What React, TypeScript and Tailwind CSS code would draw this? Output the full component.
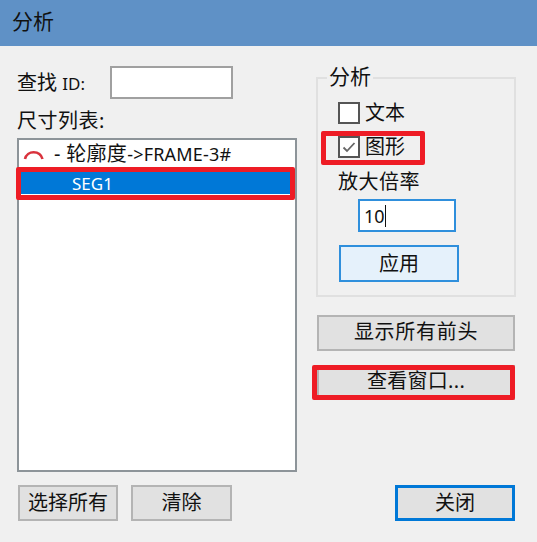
const font = { fontFamily: '"Noto Sans", "Noto Sans CJK SC", sans-serif' }

function GrayButton({ label, className }: { label: string; className: string }) {
  return (
    <button
      type="button"
      className={`flex items-center justify-center border-2 bg-[#e1e1e1] text-[20px] leading-none text-[#111] ${className}`}
    >
      {label}
    </button>
  )
}

function Checkbox({ checked, label }: { checked?: boolean; label: string }) {
  return (
    <div className="flex h-[22px] items-center">
      <span className="flex h-[22px] w-[22px] items-center justify-center border-2 border-[#555] bg-white">
        {checked && (
          <svg width="14" height="12" viewBox="0 0 14 12" fill="none">
            <path d="M1.5 6.5 L5 10 L12.5 2" stroke="#666" strokeWidth="1.8" />
          </svg>
        )}
      </span>
      <span className="ml-[5px] text-[20px] leading-none text-[#111]">{label}</span>
    </div>
  )
}

export default function App() {
  return (
    <div className="flex h-[542px] w-[537px] flex-col overflow-hidden bg-[#f0f0f0]" style={font}>
      <div className="flex h-[46px] shrink-0 items-center bg-[#5f91c6] pb-[2px] pl-[12px] text-[21px] text-[#111]">
        分析
      </div>

      <div className="flex flex-1 pl-[17px] pt-[20px]">
        {/* left column */}
        <div className="flex w-[280px] flex-col">
          <div className="flex h-[33px] items-center">
            <span className="w-[93px] text-[20px] leading-none text-[#111]">
              查找 <span className="text-[17px]">ID:</span>
            </span>
            <div className="h-[33px] w-[123px] border-2 border-[#a0a0a0] bg-white" />
          </div>
          <div className="flex h-[39px] items-center pt-[5px] text-[20px] leading-none tracking-[0.5px] text-[#111]">
            尺寸列表:
          </div>

          <div className="relative h-[334px] border-2 border-[#8d9499] bg-white">
            <div className="flex h-[28px] items-center pl-[4px] text-[#111]">
              <svg width="22" height="14" viewBox="0 0 22 14" fill="none">
                <path d="M2 12 C4 3 17 3 19.5 12" stroke="#d9323c" strokeWidth="2.6" />
              </svg>
              <span className="ml-[9px] text-[20px] leading-none tracking-[0.3px]">- 轮廓度</span>
              <span className="text-[18px] leading-none tracking-[0.2px]">-&gt;FRAME-3#</span>
            </div>
            <div className="ml-[2px] mr-[4px] mt-[4px] flex h-[22px] items-center bg-[#0078d7] pl-[51px] text-[17px] leading-none text-white">
              SEG1
            </div>
            {/* red annotation */}
            <div className="absolute left-[-3px] top-[27px] h-[33px] w-[279px] rounded-[2px] border-[5px] border-[#ee1c25]" />
          </div>

          <div className="ml-px mt-[13px] flex gap-[13px]">
            <GrayButton label="选择所有" className="h-[36px] w-[100px] border-[#b4b4b4]" />
            <GrayButton label="清除" className="h-[36px] w-[101px] border-[#b4b4b4]" />
          </div>
        </div>

        {/* right column */}
        <div className="ml-[19px] flex h-[455px] w-[200px] flex-col">
          <div className="relative mt-[11px] h-[220px] border-2 border-[#e0e0e0] pl-[20px] pt-[23px]">
            <span className="absolute left-[9px] top-[-15px] bg-[#f0f0f0] px-[2px] text-[21px] leading-[24px] text-[#111]">
              分析
            </span>
            <div className="flex flex-col gap-[12px]">
              <Checkbox label="文本" />
              <Checkbox checked label="图形" />
            </div>
            {/* red annotation */}
            <div className="absolute left-[3px] top-[52px] h-[34px] w-[104px] rounded-[2px] border-[5px] border-[#ee1c25]" />
            <div className="mt-[12px] text-[20px] leading-[24px] tracking-[0.5px] text-[#111]">放大倍率</div>
            <div className="ml-[20px] mt-[5px] flex h-[33px] w-[98px] items-center border-2 border-[#2f8fdc] bg-white pl-[4px] text-[18px] leading-none text-[#111]">
              10<span className="h-[22px] w-px bg-[#111]" />
            </div>
            <GrayButton
              label="应用"
              className="ml-px mt-[13px] h-[37px] w-[120px] border-[#2f8fdc] !bg-[#e5f1fb]"
            />
          </div>

          <GrayButton
            label="显示所有前头"
            className="ml-px mt-[18px] h-[36px] w-[198px] border-[#b4b4b4] pb-[2px] tracking-[0.7px]"
          />

          <div className="relative ml-px mt-[14px] h-[35px] w-[198px]">
            <GrayButton label="查看窗口..." className="h-[35px] w-[198px] border-[#b4b4b4] pb-[3px] tracking-[0.3px]" />
            <div className="absolute inset-y-0 left-[-5px] right-0 rounded-[2px] border-[5px] border-[#ee1c25]" />
          </div>

          <GrayButton label="关闭" className="ml-auto mr-px mt-auto h-[36px] w-[120px] border-[3px] border-[#0078d7]" />
        </div>
      </div>
    </div>
  )
}
